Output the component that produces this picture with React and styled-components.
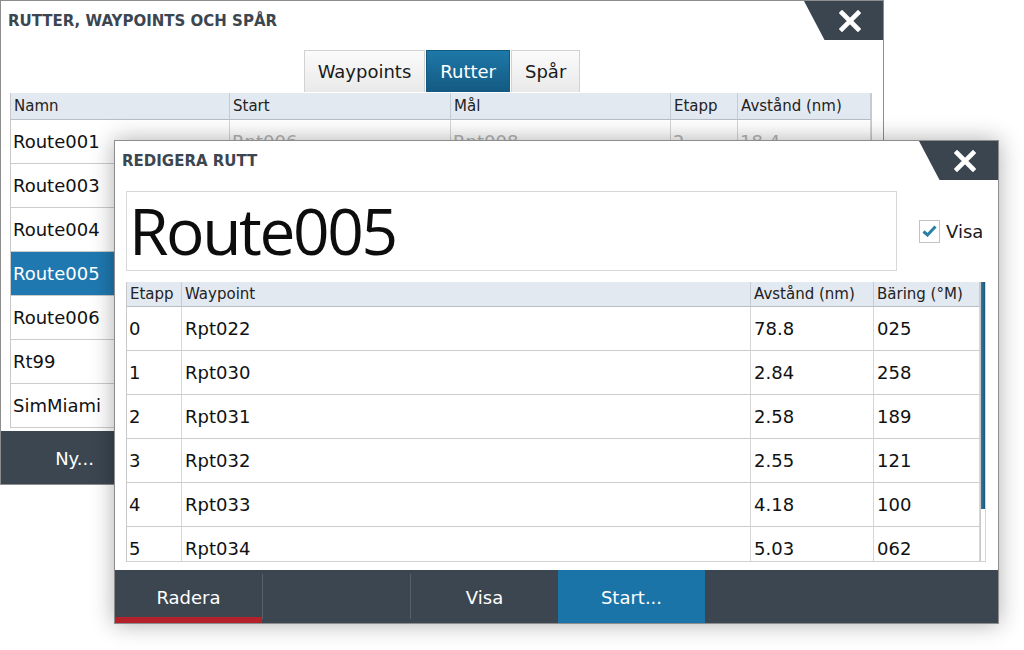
import styled, { createGlobalStyle } from "styled-components";

const GlobalStyle = createGlobalStyle`
  html, body {
    margin: 0;
    padding: 0;
    background: #ffffff;
  }
  body {
    font-family: "DejaVu Sans", "Liberation Sans", sans-serif;
    color: #1a1a1a;
  }
`;

const Desktop = styled.div`
  position: relative;
  width: 1024px;
  height: 650px;
  overflow: hidden;
  background: #ffffff;
`;

const Window = styled.div`
  position: absolute;
  left: ${(p) => p.$x}px;
  top: ${(p) => p.$y}px;
  width: ${(p) => p.$w}px;
  height: ${(p) => p.$h}px;
  box-sizing: border-box;
  background: #ffffff;
  border: 1px solid #8d8d8d;
  display: flex;
  flex-direction: column;
  box-shadow: ${(p) => (p.$front ? "0 0 22px rgba(0,0,0,0.32)" : "none")};
`;

const TitleBar = styled.div`
  height: 39px;
  flex-shrink: 0;
  display: flex;
  align-items: center;
  justify-content: space-between;
`;

const Title = styled.div`
  padding-left: 7px;
  font-size: 15px;
  font-weight: bold;
  color: #3c4650;
`;

const CloseButton = styled.div`
  align-self: stretch;
  width: 79px;
  background: #3a4550;
  clip-path: polygon(0 0, 100% 0, 100% 100%, 26% 100%);
  display: flex;
  align-items: center;
  justify-content: center;
  padding-left: 12px;
  box-sizing: border-box;
`;

const Tabs = styled.div`
  display: flex;
  justify-content: center;
  gap: 1px;
  margin-top: 10px;
  height: 42px;
  flex-shrink: 0;
`;

const Tab = styled.div`
  padding: 0 13px;
  display: flex;
  align-items: center;
  font-size: 18px;
  box-sizing: border-box;
  color: ${(p) => (p.$active ? "#ffffff" : "#1a1a1a")};
  background: ${(p) =>
    p.$active
      ? "linear-gradient(#1e78a8, #135a82)"
      : "linear-gradient(#fbfbfb, #e9e9e9)"};
  border: 1px solid ${(p) => (p.$active ? "#135a82" : "#d2d2d2")};
  border-bottom: none;
`;

const Table = styled.div`
  display: grid;
  grid-template-columns: ${(p) => p.$cols};
  grid-template-rows: ${(p) => p.$head}px;
  grid-auto-rows: 44px;
  border-left: 1px solid #c9c9c9;
  border-right: 1px solid #c9c9c9;
  overflow: hidden;
  flex: 1;
`;

const BackTableWrap = styled.div`
  margin: 1px 11px 0 9px;
  height: 335px;
  display: flex;
  flex-shrink: 0;
`;

const HeadCell = styled.div`
  box-sizing: border-box;
  background: #e3e9f1;
  border-right: 1px solid #c6ccd4;
  border-bottom: 1px solid #b7bec6;
  padding-left: 3px;
  font-size: 15px;
  display: flex;
  align-items: center;
  color: #222;
  white-space: nowrap;
`;

const Cell = styled.div`
  box-sizing: border-box;
  border-right: 1px solid #d6d6d6;
  border-bottom: 1px solid #cbcbcb;
  padding-left: ${(p) => (p.$pad ? p.$pad : 3)}px;
  display: flex;
  align-items: center;
  font-size: 18px;
  white-space: nowrap;
  color: ${(p) => (p.$sel ? "#ffffff" : p.$dim ? "#b4b4b4" : "#111")};
  background: ${(p) => (p.$sel ? "#1f79b0" : "#ffffff")};
`;

const Footer = styled.div`
  margin-top: auto;
  height: 53px;
  flex-shrink: 0;
  background: #3b4651;
  display: flex;
  align-items: stretch;
`;

const FooterButton = styled.div`
  width: 147px;
  box-sizing: border-box;
  display: flex;
  align-items: center;
  justify-content: center;
  color: #ffffff;
  font-size: 18px;
  padding-top: 8px;
  background: ${(p) => (p.$primary ? "#1b74a7" : "transparent")};
  border-bottom: 6px solid ${(p) => (p.$danger ? "#b3212b" : p.$primary ? "#1b74a7" : "transparent")};
`;

const Separator = styled.div`
  width: 1px;
  margin: 4px 0;
  background: #56616b;
`;

const NameRow = styled.div`
  display: flex;
  align-items: center;
  margin: 11px 12px 0 11px;
  flex-shrink: 0;
`;

const NameBox = styled.div`
  width: 771px;
  height: 80px;
  box-sizing: border-box;
  border: 1px solid #d8d8d8;
  display: flex;
  align-items: center;
  padding-left: 2px;
  font-family: "Open Sans", "DejaVu Sans", sans-serif;
  font-size: 64px;
  line-height: 1;
  letter-spacing: -2.4px;
  color: #0d0d0d;
`;

const CheckWrap = styled.label`
  display: flex;
  align-items: center;
  gap: 6px;
  margin-left: 22px;
  font-size: 18px;
`;

const CheckBox = styled.span`
  width: 21px;
  height: 23px;
  box-sizing: border-box;
  border: 1px solid #c3c3c3;
  background: #fff;
  display: flex;
  align-items: center;
  justify-content: center;
`;

const FrontTableWrap = styled.div`
  margin: 11px 12px 0 11px;
  height: 279px;
  display: flex;
  flex-shrink: 0;
  border-bottom: 1px solid #d2d2d2;
`;

const ScrollTrack = styled.div`
  width: 4px;
  flex-shrink: 0;
  border-right: 1px solid #d6d6d6;
`;

const ScrollThumb = styled.div`
  height: 227px;
  background: linear-gradient(90deg, #2f79a4, #1d5779);
`;

function CloseIcon() {
  return (
    <svg width="22" height="22" viewBox="0 0 22 22">
      <path d="M3 3 L19 19 M19 3 L3 19" stroke="#fff" strokeWidth="4.6" strokeLinecap="square" />
    </svg>
  );
}

// only the first route's details peek out from under the edit dialog
const routes = [
  ["Route001", "Rpt006", "Rpt008", "2", "18.4"],
  ["Route003", "", "", "", ""],
  ["Route004", "", "", "", ""],
  ["Route005", "", "", "", ""],
  ["Route006", "", "", "", ""],
  ["Rt99", "", "", "", ""],
  ["SimMiami", "", "", "", ""],
];

const legs = [
  ["0", "Rpt022", "78.8", "025"],
  ["1", "Rpt030", "2.84", "258"],
  ["2", "Rpt031", "2.58", "189"],
  ["3", "Rpt032", "2.55", "121"],
  ["4", "Rpt033", "4.18", "100"],
  ["5", "Rpt034", "5.03", "062"],
];

export default function App() {
  return (
    <Desktop>
      <GlobalStyle />
      <Window $x={0} $y={0} $w={884} $h={485}>
        <TitleBar>
          <Title>RUTTER, WAYPOINTS OCH SPÅR</Title>
          <CloseButton>
            <CloseIcon />
          </CloseButton>
        </TitleBar>
        <Tabs>
          <Tab>Waypoints</Tab>
          <Tab $active>Rutter</Tab>
          <Tab>Spår</Tab>
        </Tabs>
        <BackTableWrap>
          <Table $cols="219px 221px 220px 67px 1fr" $head={27}>
            {["Namn", "Start", "Mål", "Etapp", "Avstånd (nm)"].map((h) => (
              <HeadCell key={h}>{h}</HeadCell>
            ))}
            {routes.map((r) =>
              r.map((v, i) => (
                <Cell key={r[0] + i} $sel={r[0] === "Route005"} $dim={i > 0} $pad={2}>
                  {v}
                </Cell>
              ))
            )}
          </Table>
        </BackTableWrap>
        <Footer>
          <FooterButton>Ny...</FooterButton>
        </Footer>
      </Window>

      <Window $x={114} $y={140} $w={885} $h={484} $front>
        <TitleBar>
          <Title>REDIGERA RUTT</Title>
          <CloseButton>
            <CloseIcon />
          </CloseButton>
        </TitleBar>
        <NameRow>
          <NameBox>Route005</NameBox>
          <CheckWrap>
            <CheckBox>
              <svg width="15" height="12" viewBox="0 0 15 12">
                <path d="M1.5 6.5 L5.5 10 L13.5 1.5" fill="none" stroke="#2a7fa3" strokeWidth="3" />
              </svg>
            </CheckBox>
            Visa
          </CheckWrap>
        </NameRow>
        <FrontTableWrap>
          <Table $cols="55px 569px 123px 1fr" $head={25}>
            {["Etapp", "Waypoint", "Avstånd (nm)", "Bäring (°M)"].map((h) => (
              <HeadCell key={h}>{h}</HeadCell>
            ))}
            {legs.map((r) =>
              r.map((v, i) => (
                <Cell key={r[0] + i} $pad={i === 0 ? 2 : 3}>
                  {v}
                </Cell>
              ))
            )}
          </Table>
          <ScrollTrack>
            <ScrollThumb />
          </ScrollTrack>
        </FrontTableWrap>
        <Footer>
          <FooterButton $danger>Radera</FooterButton>
          <Separator />
          <FooterButton />
          <Separator />
          <FooterButton>Visa</FooterButton>
          <FooterButton $primary>Start...</FooterButton>
        </Footer>
      </Window>
    </Desktop>
  );
}
